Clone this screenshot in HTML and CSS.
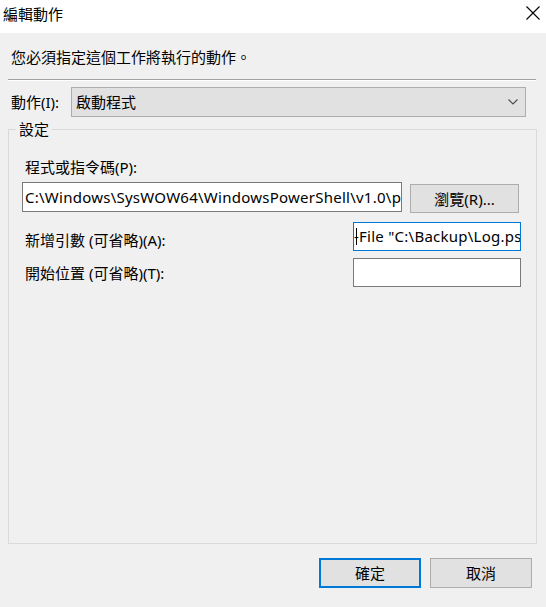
FILE: index.html
```html
<!DOCTYPE html>
<html lang="zh-Hant">
<head>
<meta charset="utf-8">
<title>編輯動作</title>
<link rel="stylesheet" href="styles.css">
</head>
<body>
<div class="window">
  <div class="titlebar">
    <span class="title">編輯動作</span>
    <svg class="close" width="14" height="14" viewBox="0 0 14 14" aria-label="關閉">
      <path d="M0.5 0.5 L13.5 13.5 M13.5 0.5 L0.5 13.5" stroke="#000" stroke-width="1.1" fill="none"/>
    </svg>
  </div>
  <p class="intro">您必須指定這個工作將執行的動作。</p>
  <div class="sep"></div>
  <div class="action-row">
    <span class="action-label">動作(I):</span>
    <div class="combo">
      <span class="combo-text">啟動程式</span>
      <svg class="chev" width="10" height="6" viewBox="0 0 10 6">
        <polyline points="0.5,0.5 5,5 9.5,0.5" stroke="#505050" stroke-width="1.2" fill="none"/>
      </svg>
    </div>
  </div>
  <fieldset class="group">
    <legend class="group-title">設定</legend>
    <div class="field-label">程式或指令碼(P):</div>
    <div class="prog-row">
      <div class="input prog">C:\Windows\SysWOW64\WindowsPowerShell\v1.0\powershell.exe</div>
      <button class="btn browse">瀏覽(R)...</button>
    </div>
    <div class="opt-row args">
      <span class="opt-label">新增引數 (可省略)(A):</span>
      <div class="input small focus"><span class="scrolled">-File "C:\Backup\Log.ps1"</span><span class="caret"></span></div>
    </div>
    <div class="opt-row start">
      <span class="opt-label">開始位置 (可省略)(T):</span>
      <div class="input small"></div>
    </div>
  </fieldset>
  <div class="buttons">
    <button class="btn dlg default">確定</button>
    <button class="btn dlg">取消</button>
  </div>
</div>
</body>
</html>
```
FILE: styles.css
```css
* { box-sizing: border-box; }
html, body { margin: 0; padding: 0; }
body {
  background: #f0f0f0;
  font-family: "Noto Sans", "Noto Sans CJK TC", sans-serif;
  font-size: 15px;
  line-height: 18px;
  color: #000;
}
.window {
  width: 546px;
  height: 607px;
  display: flex;
  flex-direction: column;
  overflow: hidden;
}
.titlebar {
  height: 33px;
  background: #fff;
  display: flex;
  align-items: flex-start;
  justify-content: space-between;
  padding: 5px 6px 0 3px;
  flex: none;
}
.title { font-size: 15px; }
.close { margin-top: 1px; }
.intro {
  margin: 15px 0 0 11px;
  flex: none;
}
.sep {
  margin: 13px 10px 0 8px;
  height: 2px;
  border-top: 1px solid #a0a0a0;
  border-bottom: 1px solid #fff;
  flex: none;
}
.action-row {
  margin: 6px 20px 0 11px;
  display: flex;
  align-items: center;
  flex: none;
}
.action-label { width: 60px; }
.combo {
  flex: 1;
  height: 30px;
  background: #e1e1e1;
  border: 1px solid #adadad;
  display: flex;
  align-items: center;
  justify-content: space-between;
  padding: 0 7px 0 4px;
}
.group {
  margin: 4px 9px 0 8px;
  padding: 0 15px 0 0;
  border: 1px solid #dadada;
  flex: 1;
  min-width: 0;
}
.group-title {
  margin-left: 7px;
  padding: 0 3px;
  line-height: 16px;
}
.field-label {
  margin: 21px 0 0 16px;
}
.prog-row {
  margin: 6px 0 0 13px;
  display: flex;
  align-items: flex-start;
}
.input {
  background: #fff;
  border: 1px solid #7a7a7a;
  white-space: nowrap;
  overflow: hidden;
  position: relative;
  letter-spacing: 0.25px;
}
.prog {
  width: 380px;
  height: 30px;
  padding: 5px 0 0 2px;
}
.btn {
  font: inherit;
  color: #000;
  background: #e1e1e1;
  border: 1px solid #adadad;
  padding: 0;
  margin: 0;
}
.browse {
  width: 109px;
  height: 29px;
  margin: 2px 0 0 8px;
}
.opt-row {
  display: flex;
  align-items: flex-start;
  justify-content: space-between;
  padding-left: 16px;
}
.opt-row.args { margin-top: 9px; }
.opt-row.start { margin-top: 7px; }
.args .opt-label { margin-top: 9px; }
.start .opt-label { margin-top: 6px; }
.small {
  width: 168px;
  height: 29px;
  padding: 4px 0 0 1px;
}
.focus { border-color: #0078d7; }
.scrolled { display: inline-block; margin-left: -1px; }
.caret {
  position: absolute;
  left: 2px;
  top: 5px;
  width: 1px;
  height: 17px;
  background: #000;
}
.buttons {
  flex: none;
  display: flex;
  justify-content: flex-end;
  gap: 9px;
  margin: 14px 14px 19px 0;
}
.dlg {
  width: 102px;
  height: 30px;
}
.default {
  border: 2px solid #0078d7;
}
```
